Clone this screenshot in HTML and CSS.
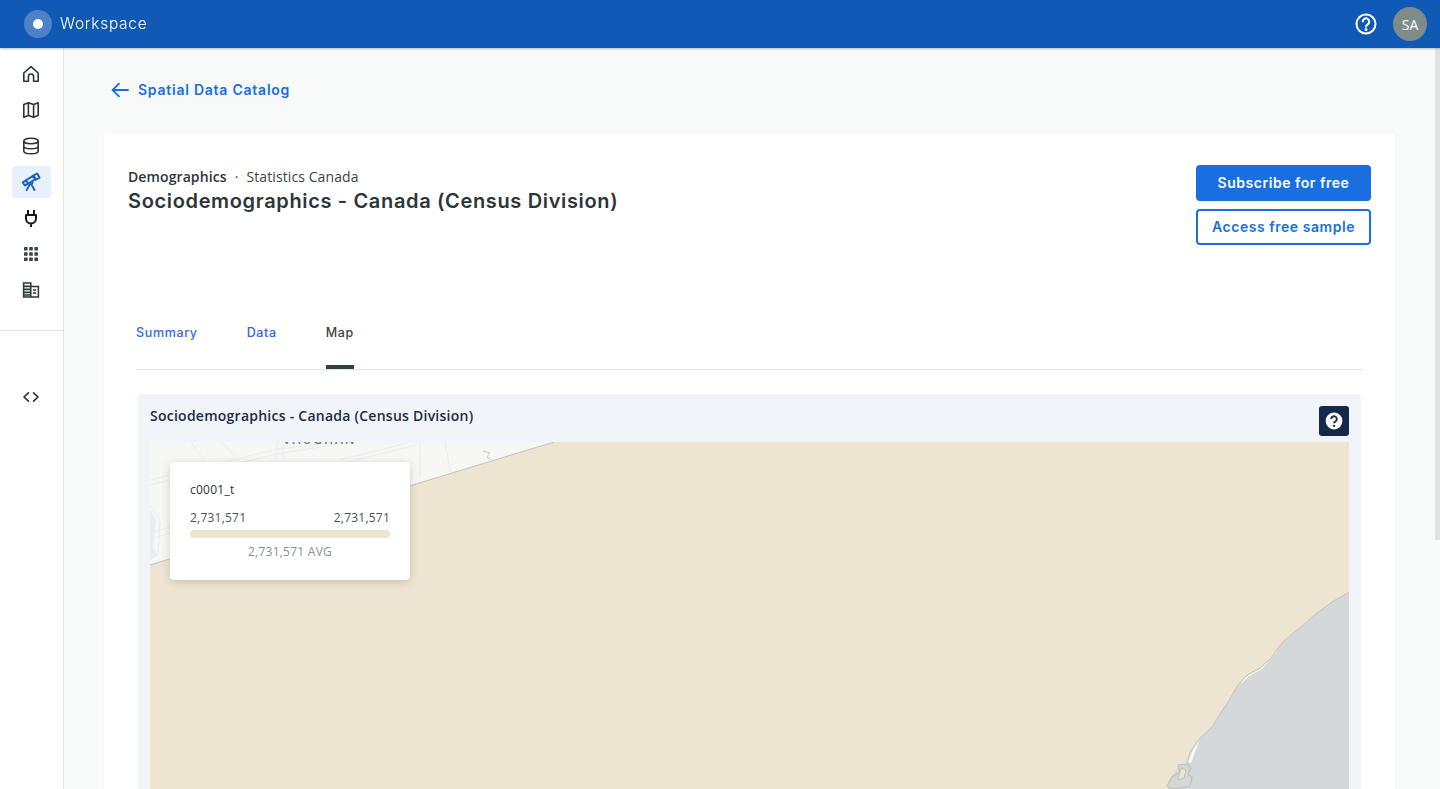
FILE: index.html
```html
<!DOCTYPE html>
<html lang="en">
<head>
  <meta charset="utf-8">
  <title>Sociodemographics - Canada (Census Division)</title>
  <link rel="stylesheet" href="styles.css">
</head>
<body>
<header class="topbar">
  <div class="brand">
    <span class="brand-logo"><span class="brand-dot"></span></span>
    <span class="brand-name">Workspace</span>
  </div>
  <div class="topbar-right">
    <svg class="help-icon" width="24" height="24" viewBox="0 0 24 24" fill="none" stroke="#fff" stroke-width="2" stroke-linecap="round">
      <circle cx="12" cy="12" r="9.5"/>
      <path d="M8.8 9.6a3.2 3.2 0 1 1 4.9 2.7c-1 .6-1.7 1.2-1.7 2.4"/>
      <circle cx="12" cy="17.6" r="0.5" fill="#fff"/>
    </svg>
    <span class="avatar">SA</span>
  </div>
</header>

<div class="layout">
  <nav class="sidebar">
    <div class="nav-list">
      <a class="nav-item">
        <svg width="20" height="20" viewBox="0 0 20 20" fill="none" stroke="#2c3539" stroke-width="1.6" stroke-linejoin="round">
          <path d="M2.8 9L10 2.6 17.2 9v8.2h-4.6v-4.6a2.6 2.6 0 0 0-5.2 0v4.6H2.8z"/>
        </svg>
      </a>
      <a class="nav-item">
        <svg width="20" height="20" viewBox="0 0 20 20" fill="none" stroke="#2c3539" stroke-width="1.6" stroke-linejoin="round">
          <path d="M2.8 4.6l4.6-1.8 5.2 1.8 4.6-1.8v12.6l-4.6 1.8-5.2-1.8-4.6 1.8zM7.4 2.8v12.6M12.6 4.6v12.6"/>
        </svg>
      </a>
      <a class="nav-item">
        <svg width="20" height="20" viewBox="0 0 20 20" fill="none" stroke="#2c3539" stroke-width="1.6">
          <ellipse cx="10" cy="5" rx="7.2" ry="2.8"/>
          <path d="M2.8 5v10c0 1.6 3.2 2.8 7.2 2.8s7.2-1.2 7.2-2.8V5M2.8 10c0 1.6 3.2 2.8 7.2 2.8s7.2-1.2 7.2-2.8"/>
        </svg>
      </a>
      <a class="nav-item nav-item-active">
        <svg width="20" height="20" viewBox="0 0 20 20" fill="none" stroke="#1a5fc4" stroke-width="1.9" stroke-linejoin="round" stroke-linecap="round">
          <path d="M1.8 10.4l10.4-6.6 2 3.4L3.8 13.6z"/>
          <path d="M5 8.4l2 3.4" />
          <path d="M12.6 3.4l3.6-1.9 2.4 4.2-3.8 2z"/>
          <path d="M8.4 11.4a1.6 1.6 0 1 0 2.8-1.6M8.7 12.8L5.6 18M10.5 12.6l3 5.4"/>
        </svg>
      </a>
      <a class="nav-item">
        <svg width="20" height="20" viewBox="0 0 20 20" fill="none" stroke="#14191c" stroke-width="2" stroke-linejoin="round">
          <path d="M7 2v5M13 2v5M5 7h10v3.4a5 5 0 0 1-10 0zM10 15.4V19"/>
        </svg>
      </a>
      <a class="nav-item">
        <svg width="20" height="20" viewBox="0 0 20 20" fill="#3a4347">
          <rect x="3" y="3" width="3.6" height="3.6" rx="0.6"/><rect x="8.2" y="3" width="3.6" height="3.6" rx="0.6"/><rect x="13.4" y="3" width="3.6" height="3.6" rx="0.6"/>
          <rect x="3" y="8.2" width="3.6" height="3.6" rx="0.6"/><rect x="8.2" y="8.2" width="3.6" height="3.6" rx="0.6"/><rect x="13.4" y="8.2" width="3.6" height="3.6" rx="0.6"/>
          <rect x="3" y="13.4" width="3.6" height="3.6" rx="0.6"/><rect x="8.2" y="13.4" width="3.6" height="3.6" rx="0.6"/><rect x="13.4" y="13.4" width="3.6" height="3.6" rx="0.6"/>
        </svg>
      </a>
      <a class="nav-item">
        <svg width="20" height="20" viewBox="0 0 20 20" fill="none" stroke="#2c3539" stroke-width="1.5">
          <path d="M2.6 3h7.2v14H2.6zM9.8 6.6h7.6V17H9.8z"/>
          <path d="M2.6 6.4h7.2M2.6 9.4h7.2M2.6 12.4h7.2M2.6 15h7.2" stroke-width="1.6"/>
          <path d="M12 10h3.2M12 13h3.2" stroke-width="1.4"/>
        </svg>
      </a>
    </div>
    <div class="nav-bottom">
      <a class="nav-item">
        <svg width="20" height="20" viewBox="0 0 20 20" fill="none" stroke="#2c3539" stroke-width="1.7" stroke-linecap="round" stroke-linejoin="round">
          <path d="M7.4 5.8L3 10l4.4 4.2M12.6 5.8L17 10l-4.4 4.2"/>
        </svg>
      </a>
    </div>
  </nav>

  <main class="content">
    <a class="back-link">
      <svg width="20" height="20" viewBox="0 0 20 20" fill="none" stroke="#1a6fe0" stroke-width="1.8" stroke-linecap="round" stroke-linejoin="round">
        <path d="M18 10H2.8M9 3.6L2.6 10 9 16.4"/>
      </svg>
      <span>Spatial Data Catalog</span>
    </a>

    <section class="card">
      <div class="card-head">
        <div>
          <div class="crumbs"><b>Demographics</b><span class="sep">·</span><span>Statistics Canada</span></div>
          <h1 class="title">Sociodemographics - Canada (Census Division)</h1>
        </div>
        <div class="actions">
          <button class="btn btn-solid">Subscribe for free</button>
          <button class="btn btn-line">Access free sample</button>
        </div>
      </div>

      <div class="tabs">
        <a class="tab">Summary</a>
        <a class="tab">Data</a>
        <a class="tab tab-active">Map</a>
      </div>

      <div class="panel">
        <div class="panel-head">
          <span class="panel-title">Sociodemographics - Canada (Census Division)</span>
          <button class="panel-help">
            <svg width="18" height="18" viewBox="0 0 18 18">
              <circle cx="9" cy="9" r="8.4" fill="#fff"/>
              <path d="M6.2 7a2.8 2.8 0 1 1 4.4 2.3c-.9.6-1.5 1-1.5 2" fill="none" stroke="#14284b" stroke-width="1.9"/>
              <circle cx="9.1" cy="13.9" r="1.15" fill="#14284b"/>
            </svg>
          </button>
        </div>
        <div class="map">
          <svg class="map-svg" width="1199" height="400" viewBox="150 442 1199 400">
            <rect x="150" y="442" width="1199" height="400" fill="#ede5d1"/>
            <path d="M150 442H554L150 565z" fill="#f7f7f5"/>
            <g fill="none" stroke="#ebebe8" stroke-width="1">
              <path d="M150 480L277 449 340 442M150 485L277 454 350 442M340 460L407 443M344 463L412 446"/>
              <path d="M150 533L170 527M150 539L170 533M277 442V462M283 442V462M191 442L205 462M222 442L240 462"/>
              <path d="M150 505L160 520 158 555M420 442V478M445 442L450 470"/>
            </g>
            <path d="M150 510L156 520 153 548 158 556 150 560z" fill="#eceeee"/>
            <path d="M483 451L490 453 487 457 492 460" fill="none" stroke="#c9c9c4" stroke-width="1"/>
            <text class="map-label" x="283" y="444">VAUGHAN</text>
            <path d="M150 565L554 442" fill="none" stroke="#c4c0b6" stroke-width="1"/>
            <path d="M1349 592L1332 602 1317 613 1307 622 1293 633 1283 642 1278 648 1272 657 1260 668 1247 675 1238 685 1228 702 1218 717 1212 727 1200 738 1190 752 1187 763 1190 770 1184 765 1178 768 1168 782 1166 842H1349z" fill="#d4d8da"/>
            <path d="M1200 738L1192 752 1188 762 1191 763zM1247 676L1260 669 1272 658 1278 649 1276 653 1262 669 1249 676 1240 685 1244 679z" fill="#fdfdfb"/>
            <path d="M1349 592L1332 602 1317 613 1307 622 1293 633 1283 642 1278 648 1272 657 1260 668 1247 675 1238 685 1228 702 1218 717 1212 727 1200 738 1190 752 1187 763" fill="none" stroke="#c6c3b8" stroke-width="1"/>
            <path d="M1187 764L1178 765 1180 772 1172 777 1167 786 1172 789 1190 786 1192 778 1188 774 1191 768z" fill="#d4d8da" stroke="#c6c0ae" stroke-width="1.2"/>
            <path d="M1181 768L1186 770 1184 778 1178 780z" fill="#ede5d1" stroke="#c6c0ae" stroke-width="1"/>
          </svg>
          <div class="legend">
            <div class="legend-name">c0001_t</div>
            <div class="legend-range"><span>2,731,571</span><span>2,731,571</span></div>
            <div class="legend-bar"></div>
            <div class="legend-avg">2,731,571 AVG</div>
          </div>
        </div>
      </div>
    </section>
  </main>
</div>
<div class="scroll-thumb"></div>
</body>
</html>
```

FILE: styles.css
```css
html, body {
  height: 100%;
  margin: 0;
  overflow: hidden;
}
body {
  display: flex;
  flex-direction: column;
  font-family: "Open Sans", "Liberation Sans", sans-serif;
  color: #2c3539;
  background: #f8f9f9;
}

.topbar {
  flex: none;
  height: 48px;
  display: flex;
  align-items: center;
  justify-content: space-between;
  padding: 0 13px 0 24px;
  background: #1059b5;
  box-shadow: 0 1px 2px rgba(0, 0, 0, 0.25);
  position: relative;
  z-index: 2;
}
.brand { display: flex; align-items: center; gap: 8px; }
.brand-logo {
  width: 28px;
  height: 28px;
  border-radius: 50%;
  background: #4d82c8;
  display: flex;
  align-items: center;
  justify-content: center;
}
.brand-dot { width: 10px; height: 10px; border-radius: 50%; background: #fff; }
.brand-name {
  font-family: Inter, sans-serif;
  font-size: 15.5px;
  line-height: 18px;
  margin-top: -1px;
  font-weight: 300;
  letter-spacing: 0.72px;
  color: #fff;
}
.topbar-right { display: flex; align-items: center; gap: 15px; }
.help-icon { display: block; }
.avatar {
  width: 34px;
  height: 34px;
  border-radius: 50%;
  background: #7f8c8a;
  color: #fff;
  font-size: 14px;
  display: flex;
  align-items: center;
  justify-content: center;
}

.layout { flex: 1; display: flex; min-height: 0; }

.sidebar {
  flex: none;
  width: 63px;
  background: #fff;
  border-right: 1px solid #e2e4e4;
}
.nav-list {
  display: flex;
  flex-direction: column;
  gap: 4px;
  padding: 10px 12px 24px;
  border-bottom: 1px solid #e2e4e4;
}
.nav-bottom { padding: 50px 12px 0; }
.nav-item {
  height: 32px;
  padding-right: 1px;
  display: flex;
  align-items: center;
  justify-content: center;
  border-radius: 4px;
}
.nav-item-active { background: #e7f0fb; }

.content {
  flex: 1;
  min-width: 0;
  padding: 29px 45px 0 40px;
}
.back-link {
  display: flex;
  align-items: center;
  gap: 8px;
  height: 24px;
  margin: 0 0 32px 6px;
  font-family: Inter, sans-serif;
  font-size: 14px;
  font-weight: 600;
  letter-spacing: 0.76px;
  color: #1a6fe0;
}
.back-link svg { margin-top: 2px; }

.card {
  background: #fff;
  border-radius: 4px;
  padding: 32px 24px 24px;
  box-shadow: 0 0 2px rgba(0, 0, 0, 0.04);
}
.card-head { display: flex; justify-content: space-between; align-items: flex-start; }
.crumbs {
  display: flex;
  align-items: center;
  height: 24px;
  margin-top: -1px;
  font-size: 14px;
  letter-spacing: 0.1px;
  color: #3c4548;
}
.crumbs b { font-weight: 600; color: #2c3539; }
.sep { margin: 0 8px; }
.title {
  margin: 1px 0 0;
  font-family: Inter, sans-serif;
  font-size: 20px;
  line-height: 24px;
  font-weight: 600;
  letter-spacing: 0.65px;
  color: #2c3539;
}
.actions { display: flex; flex-direction: column; gap: 8px; width: 175px; }
.btn {
  height: 36px;
  padding: 0 0 2px;
  border-radius: 4px;
  font-family: Inter, sans-serif;
  font-size: 14px;
  font-weight: 600;
  letter-spacing: 0.54px;
}
.btn-solid { background: #1a6fe0; border: none; color: #fff; }
.btn-line { background: #fff; border: 2px solid #1a6fe0; color: #1a6fe0; }

.tabs {
  display: flex;
  gap: 49px;
  margin: 78px 8px 0;
  border-bottom: 1px solid #e2e4e4;
}
.tab {
  padding-bottom: 26px;
  font-family: Inter, sans-serif;
  font-size: 12.5px;
  line-height: 20px;
  font-weight: 500;
  letter-spacing: 0.65px;
  color: #3b62ee;
}
.tab-active { color: #3c4548; box-shadow: inset 0 -4px 0 #2f3f48; }

.panel {
  margin: 24px 10px 0;
  padding: 12px;
  background: #f1f5f9;
  border-radius: 4px;
}
.panel-head {
  display: flex;
  align-items: flex-start;
  justify-content: space-between;
  height: 30px;
  margin-bottom: 6px;
}
.panel-title {
  font-size: 14px;
  line-height: 20px;
  font-weight: 600;
  letter-spacing: 0.25px;
  color: #1e2b44;
}
.panel-help {
  width: 30px;
  height: 30px;
  padding: 0;
  border: none;
  border-radius: 3px;
  background: #14284b;
  display: flex;
  align-items: center;
  justify-content: center;
}

.map { position: relative; height: 400px; }
.map-svg { display: block; }
.map-label {
  font-family: "Open Sans", sans-serif;
  font-size: 12px;
  font-weight: 600;
  letter-spacing: 2px;
  fill: #777;
}
.legend {
  position: absolute;
  top: 20px;
  left: 20px;
  width: 240px;
  height: 118px;
  box-sizing: border-box;
  padding: 20px;
  background: #fff;
  border-radius: 4px;
  box-shadow: 0 2px 8px rgba(60, 50, 20, 0.2);
  font-size: 12px;
  line-height: 16px;
}
.legend-name { color: #2c3539; letter-spacing: 0.25px; margin-bottom: 12px; }
.legend-range { display: flex; justify-content: space-between; color: #4a5458; letter-spacing: 0.22px; margin-bottom: 4px; }
.legend-bar { height: 8px; border-radius: 4px; background: #ede5d1; }
.legend-avg { margin-top: 6px; text-align: center; color: #8a9092; letter-spacing: 0.25px; }

.scroll-thumb {
  position: fixed;
  top: 48px;
  right: 0;
  width: 5px;
  height: 492px;
  background: #e1e3e3;
}
```
